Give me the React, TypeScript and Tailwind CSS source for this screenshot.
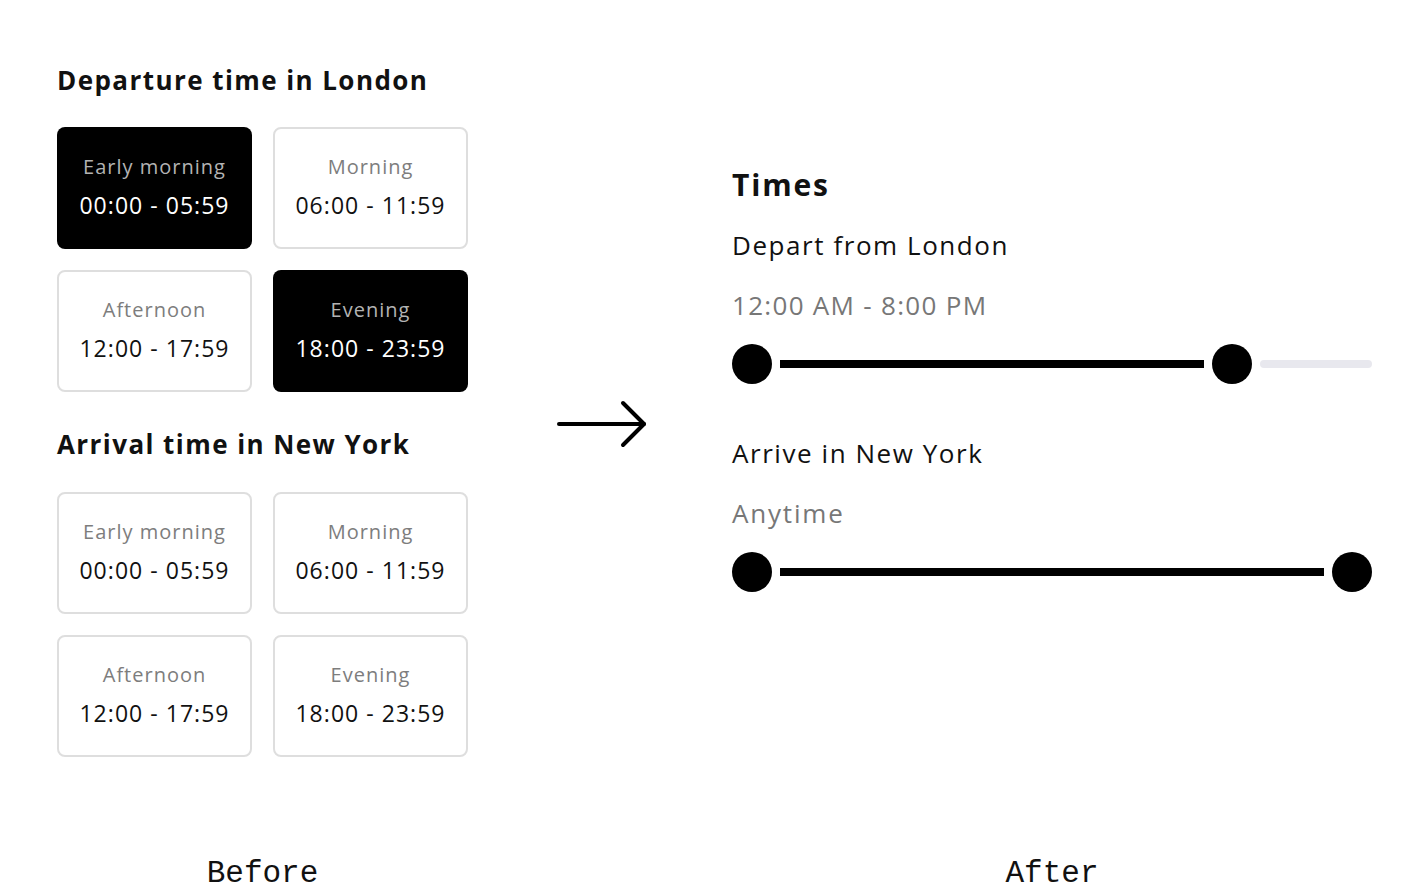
import React from 'react'

type Slot = { label: string; range: string; selected?: boolean }

const departure: Slot[] = [
  { label: 'Early morning', range: '00:00 - 05:59', selected: true },
  { label: 'Morning', range: '06:00 - 11:59' },
  { label: 'Afternoon', range: '12:00 - 17:59' },
  { label: 'Evening', range: '18:00 - 23:59', selected: true },
]

const arrival: Slot[] = [
  { label: 'Early morning', range: '00:00 - 05:59' },
  { label: 'Morning', range: '06:00 - 11:59' },
  { label: 'Afternoon', range: '12:00 - 17:59' },
  { label: 'Evening', range: '18:00 - 23:59' },
]

function SlotCard({ slot }: { slot: Slot }) {
  return (
    <div
      className={
        slot.selected
          ? 'h-[122px] w-[195px] pb-[4px] rounded-[8px] bg-black flex flex-col items-center justify-center'
          : 'h-[122px] w-[195px] pb-[4px] rounded-[8px] border-2 border-[#dedede] bg-white flex flex-col items-center justify-center'
      }
    >
      <div
        className={
          slot.selected
            ? 'text-[20px] leading-[28px] tracking-[0.05em] text-[#b3b3b3]'
            : 'text-[20px] leading-[28px] tracking-[0.05em] text-[#7d7d7d]'
        }
      >
        {slot.label}
      </div>
      <div
        className={
          slot.selected
            ? 'mt-[9px] text-[23px] leading-[30px] tracking-[0.045em] text-white'
            : 'mt-[9px] text-[23px] leading-[30px] tracking-[0.045em] text-[#111]'
        }
      >
        {slot.range}
      </div>
    </div>
  )
}

function SlotGrid({ slots }: { slots: Slot[] }) {
  return (
    <div className="grid grid-cols-[195px_195px] gap-[21px]">
      {slots.map((s, i) => (
        <SlotCard key={i} slot={s} />
      ))}
    </div>
  )
}

// Range slider drawn as static thumbs + track segments
function RangeSlider({ end }: { end: 'partial' | 'full' }) {
  return (
    <div className="flex items-center h-[40px] w-[640px]">
      <div className="h-[40px] w-[40px] rounded-full bg-black shrink-0" />
      <div className="mx-[8px] h-[8px] flex-1 bg-black" />
      <div className="h-[40px] w-[40px] rounded-full bg-black shrink-0" />
      {end === 'partial' && (
        <div className="ml-[8px] h-[8px] w-[112px] rounded-full bg-[#e8e8ee]" />
      )}
    </div>
  )
}

export default function App() {
  return (
    <div
      className="flex h-[890px] w-[1420px] bg-white text-[#111] overflow-hidden"
      style={{ fontFamily: '"Open Sans", "Noto Sans", sans-serif' }}
    >
      {/* Before */}
      <div className="ml-[57px] flex w-[411px] flex-col">
        <h2 className="mt-[64px] text-[26px] leading-[32px] tracking-[0.055em] font-bold">
          Departure time in London
        </h2>
        <div className="mt-[31px]">
          <SlotGrid slots={departure} />
        </div>
        <h2 className="mt-[36px] text-[26px] leading-[32px] tracking-[0.055em] font-bold">
          Arrival time in New York
        </h2>
        <div className="mt-[32px]">
          <SlotGrid slots={arrival} />
        </div>
        <div
          className="mt-auto mb-[-2px] text-center text-[31px] leading-[36px] text-[#111]"
          style={{ fontFamily: '"Liberation Mono", monospace' }}
        >
          Before
        </div>
      </div>

      {/* arrow */}
      <div className="w-[264px] shrink-0">
        <svg
          className="ml-[89px] mt-[400px]"
          width="92"
          height="48"
          viewBox="0 0 92 48"
          fill="none"
          stroke="#000"
          strokeWidth="4"
          strokeLinecap="round"
          strokeLinejoin="round"
        >
          <path d="M2 24H87" />
          <path d="M66 3L87 24L66 45" />
        </svg>
      </div>

      {/* After */}
      <div className="flex w-[640px] flex-col">
        <h2 className="mt-[167px] text-[30px] leading-[36px] tracking-[0.06em] font-bold">
          Times
        </h2>
        <div className="mt-[26px] text-[26px] leading-[32px] tracking-[0.06em]">
          Depart from London
        </div>
        <div className="mt-[28px] text-[26px] leading-[32px] tracking-[0.05em] text-[#777]">
          12:00 AM - 8:00 PM
        </div>
        <div className="mt-[23px]">
          <RangeSlider end="partial" />
        </div>
        <div className="mt-[53px] text-[26px] leading-[32px] tracking-[0.06em]">
          Arrive in New York
        </div>
        <div className="mt-[28px] text-[26px] leading-[32px] tracking-[0.07em] text-[#777]">
          Anytime
        </div>
        <div className="mt-[23px]">
          <RangeSlider end="full" />
        </div>
        <div
          className="mt-auto mb-[-2px] text-center text-[31px] leading-[36px] text-[#111]"
          style={{ fontFamily: '"Liberation Mono", monospace' }}
        >
          After
        </div>
      </div>
    </div>
  )
}
